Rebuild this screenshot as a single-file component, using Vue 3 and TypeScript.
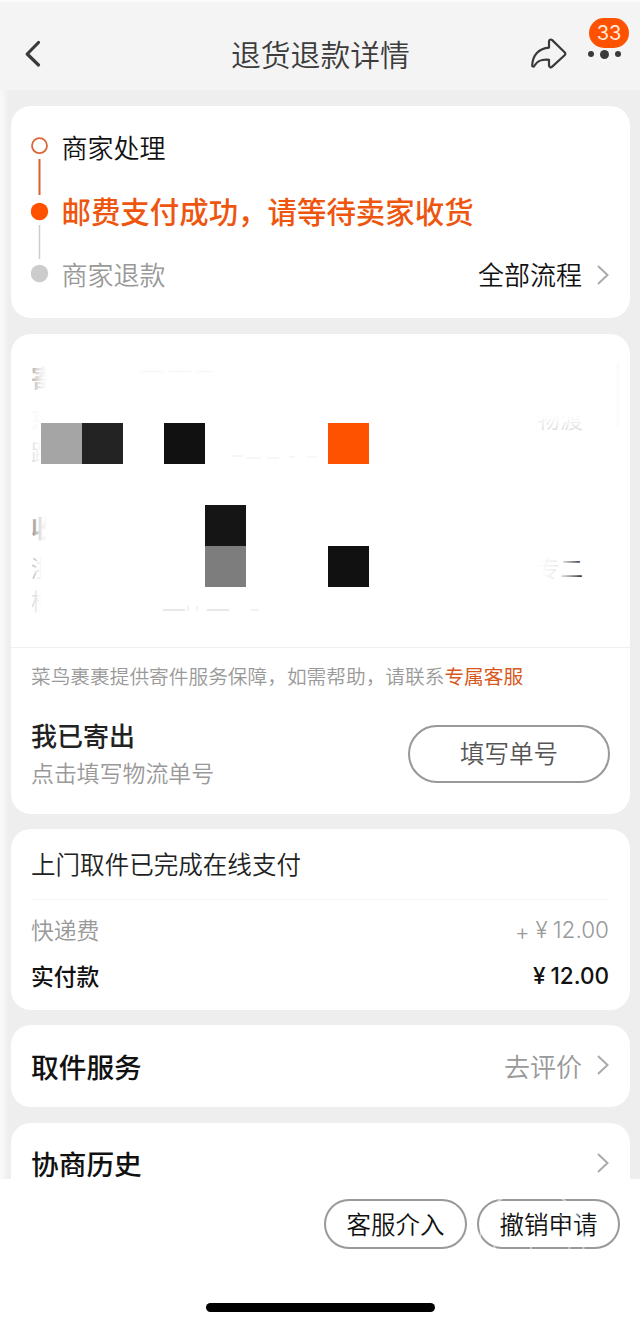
<script setup lang="ts">
interface Step {
  label: string
  state: 'done' | 'active' | 'pending'
}
interface Block {
  col: number
  row: number
  color: string
}

const steps: Step[] = [
  { label: '商家处理', state: 'done' },
  { label: '邮费支付成功，请等待卖家收货', state: 'active' },
  { label: '商家退款', state: 'pending' },
]

// Mosaic tiles hiding the sender and receiver addresses, on a 41px grid
const blocks: Block[] = [
  { col: 0, row: 0, color: '#a5a5a5' },
  { col: 1, row: 0, color: '#232323' },
  { col: 3, row: 0, color: '#111111' },
  { col: 7, row: 0, color: '#ff5200' },
  { col: 4, row: 2, color: '#151515' },
  { col: 4, row: 3, color: '#7d7d7d' },
  { col: 7, row: 3, color: '#111111' },
]
</script>

<template>
  <div class="page">
    <header class="header">
      <svg class="back" width="18" height="28" viewBox="0 0 18 28">
        <path d="M14.500 2.500 3.200 14 14.500 25" />
      </svg>
      <h1 class="title">退货退款详情</h1>
      <svg class="share" width="38" height="32" viewBox="0 0 38 32">
        <path d="M19 3.600c0-2 1.800-2.700 3.200-1.500L34.600 14.200c1 1 1 2.100 0 3L22.200 28.600c-1.400 1.300-3.200.6-3.200-1.400v-5.400C11.500 21 7.500 22.500 4.400 27.800c-.9 1.300-2.300.9-2.200-.6C2.800 17 9 10.300 19 9.600z" />
      </svg>
      <div class="more">
        <i class="dot"></i><i class="dot big"></i><i class="dot"></i>
        <span class="badge">33</span>
      </div>
    </header>

    <main class="content">
      <section class="card progress">
        <svg class="rail" width="18" height="190" viewBox="0 0 18 190">
          <circle cx="8.500" cy="30.700" r="7.500" fill="none" stroke="#dc6638" stroke-width="1.800" />
          <path d="M8.500 44v36" stroke="#d9602f" stroke-width="2" />
          <circle cx="8.500" cy="96.500" r="8.700" fill="#ff5200" />
          <path d="M8.500 110v34" stroke="#ccc" stroke-width="1.500" />
          <circle cx="8.500" cy="158.500" r="8.700" fill="#ccc" />
        </svg>
        <div class="steps">
          <div v-for="s in steps" :key="s.label" class="step" :class="s.state">
            <span>{{ s.label }}</span>
            <span v-if="s.state === 'pending'" class="link">
              全部流程
              <svg class="chev" width="14" height="22" viewBox="0 0 14 22"><path d="M2 2l9.500 9L2 20" /></svg>
            </span>
          </div>
        </div>
      </section>

      <section class="card shipping">
        <div class="address">
          <svg class="traces" width="619" height="313" viewBox="0 0 619 313">
            <defs>
              <linearGradient id="fade-l" gradientUnits="userSpaceOnUse" x1="20" y1="0" x2="36" y2="0">
                <stop offset="0" stop-color="#555" stop-opacity=".75" />
                <stop offset=".5" stop-color="#888" stop-opacity=".3" />
                <stop offset="1" stop-color="#999" stop-opacity="0" />
              </linearGradient>
              <linearGradient id="fade-s" gradientUnits="userSpaceOnUse" x1="20" y1="0" x2="31" y2="0">
                <stop offset="0" stop-color="#777" stop-opacity=".6" />
                <stop offset="1" stop-color="#999" stop-opacity="0" />
              </linearGradient>
              <linearGradient id="fade-r" gradientUnits="userSpaceOnUse" x1="526" y1="0" x2="572" y2="0">
                <stop offset="0" stop-color="#999" stop-opacity="0" />
                <stop offset=".5" stop-color="#777" stop-opacity=".2" />
                <stop offset="1" stop-color="#222" stop-opacity="1" />
              </linearGradient>
              <linearGradient id="fade-t" x1="0" y1="0" x2="0" y2="1">
                <stop offset=".4" stop-color="#999" stop-opacity="0" />
                <stop offset="1" stop-color="#888" stop-opacity=".4" />
              </linearGradient>
            </defs>
            <g font-size="25" font-weight="700" fill="url(#fade-l)">
              <text x="20" y="54" opacity=".7">寄</text>
              <text x="20" y="204">收</text>
            </g>
            <g font-size="23" fill="url(#fade-s)">
              <text x="20" y="94" opacity=".15">京</text>
              <text x="20" y="127" opacity=".5">路</text>
              <text x="20" y="243">浙</text>
              <text x="20" y="276" opacity=".6">楼</text>
            </g>
            <text x="526" y="94" font-size="23" fill="url(#fade-t)">物渡</text>
            <text x="526" y="243" font-size="23" fill="url(#fade-r)">专二</text>
            <g fill="none" stroke="#aaa" stroke-width="1.500">
              <path d="M130 37.500h72" stroke-dasharray="22 6" opacity=".1" />
              <path d="M220 122h12m4 2h14m6 0h12m10-1h6m12 0h10" opacity=".13" />
              <path d="M152 276h22m22 0h22" opacity=".35" />
              <path d="M177 272v5m9-5v5m54-1h8" opacity=".2" />
            </g>
            <path d="M607 28v64" stroke="#fbfbfb" stroke-width="3" />
          </svg>
          <div class="mosaic">
            <i
              v-for="b in blocks"
              :key="`${b.col}-${b.row}`"
              :style="{ gridColumn: b.col + 1, gridRow: b.row + 1, background: b.color }"
            ></i>
          </div>
        </div>
        <p class="notice">菜鸟裹裹提供寄件服务保障，如需帮助，请联系<a>专属客服</a></p>
        <div class="sent">
          <div>
            <h2>我已寄出</h2>
            <p>点击填写物流单号</p>
          </div>
          <button class="pill fill">填写单号</button>
        </div>
      </section>

      <section class="card payment">
        <h3>上门取件已完成在线支付</h3>
        <div class="row muted"><span>快递费</span><span class="price"><i>+</i><b>¥</b>12.00</span></div>
        <div class="row total"><span>实付款</span><span class="price"><b>¥</b>12.00</span></div>
      </section>

      <section class="card entry">
        <h2>取件服务</h2>
        <span class="link muted">
          去评价
          <svg class="chev" width="14" height="22" viewBox="0 0 14 22"><path d="M2 2l9.500 9L2 20" /></svg>
        </span>
      </section>

      <section class="card entry last">
        <h2>协商历史</h2>
        <svg class="chev" width="14" height="22" viewBox="0 0 14 22"><path d="M2 2l9.500 9L2 20" /></svg>
      </section>
    </main>

    <footer class="footer">
      <div class="actions">
        <button class="pill">客服介入</button>
        <button class="pill">撤销申请</button>
        <svg class="seal" width="108" height="108" viewBox="0 0 108 108">
          <circle cx="54" cy="54" r="52" />
          <circle cx="54" cy="54" r="38" />
          <path d="M32 76h44M40 64v22m13-30v28m12-20v22" />
        </svg>
      </div>
      <div class="home"></div>
    </footer>
  </div>
</template>

<style>
body {
  margin: 0;
  background: #fff;
}
</style>

<style scoped>
.page {
  width: 640px;
  height: 1325px;
  display: flex;
  flex-direction: column;
  overflow: hidden;
  background: linear-gradient(90deg, #f8f8f8 0 2px, #f2f2f2 6px, #eee 9px);
  color: #111;
  font-family: 'Noto Sans CJK SC', sans-serif;
  font-weight: 350;
}
h1, h2, h3, p {
  margin: 0;
  font-weight: 350;
}
i, b {
  font-style: normal;
  font-weight: inherit;
}
.header {
  flex: none;
  box-sizing: border-box;
  height: 90px;
  padding: 16px 19px 0 24px;
  display: flex;
  align-items: center;
  background: #f4f4f4;
  border-top: 2px solid #fafafa;
}
.back path {
  fill: none;
  stroke: #3a3a3a;
  stroke-width: 3.2;
  stroke-linecap: round;
  stroke-linejoin: round;
}
.title {
  margin: 0 0 3px 189px;
  font-size: 29.800px;
  line-height: 40px;
  color: #3c3c3c;
}
.share {
  margin-left: auto;
}
.share path {
  fill: none;
  stroke: #3a3a3a;
  stroke-width: 2.2;
  stroke-linejoin: round;
}
.more {
  position: relative;
  width: 33px;
  margin-left: 20px;
  display: flex;
  align-items: center;
  justify-content: space-between;
}
.dot {
  width: 6px;
  height: 6px;
  border-radius: 50%;
  background: #3a3a3a;
}
.dot.big {
  width: 9px;
  height: 9px;
}
.badge {
  position: absolute;
  left: 1px;
  bottom: 10.500px;
  width: 40px;
  height: 30px;
  border-radius: 15px;
  background: #ff5200;
  color: #ffe9d8;
  font: 20px/31px Inter, sans-serif;
  text-align: center;
}
.content {
  flex: 1;
  min-height: 0;
  overflow: hidden;
  box-sizing: border-box;
  padding: 15.500px 10px 0 10.500px;
  display: flex;
  flex-direction: column;
  gap: 15.500px;
}
.card {
  flex: none;
  box-sizing: border-box;
  border-radius: 20px;
  background: #fff;
}
.progress {
  height: 212.500px;
  padding: 9.500px 20px 0 20.300px;
  display: flex;
  gap: 12.700px;
}
.steps {
  flex: 1;
}
.step {
  height: 63.400px;
  display: flex;
  align-items: center;
  justify-content: space-between;
  font-size: 26px;
  white-space: nowrap;
}
.step.active {
  font-size: 29.450px;
  font-weight: 500;
  color: #ee560f;
}
.step.pending {
  color: #999;
}
.step .chev {
  margin-top: 3px;
}
.link {
  display: flex;
  align-items: center;
  gap: 14px;
  font-size: 26px;
  color: #111;
}
.link.muted {
  color: #999;
}
.link.muted {
  margin-top: -2px;
}
.chev path {
  fill: none;
  stroke: #aaa;
  stroke-width: 2;
}
.shipping {
  height: 480px;
}
.address {
  position: relative;
  height: 313px;
  border-bottom: 1px solid #f0f0f0;
}
.traces {
  position: absolute;
  left: 0;
  top: 0;
}
.mosaic {
  position: relative;
  display: grid;
  grid-template: repeat(4, 41px) / repeat(8, 41px);
  padding: 89.500px 0 0 30.500px;
}
.notice {
  padding: 13px 20.500px 0;
  font-size: 19.700px;
  line-height: 30px;
  color: #999;
}
.notice a {
  color: #d9581c;
  font-weight: 400;
}
.sent {
  display: flex;
  justify-content: space-between;
  padding: 26px 20px 0 20.500px;
}
.sent h2 {
  font-size: 26px;
  line-height: 36px;
  font-weight: 500;
  color: #222;
}
.sent p {
  margin-top: 3px;
  font-size: 22.900px;
  line-height: 32px;
  color: #999;
}
.pill {
  box-sizing: border-box;
  width: 143px;
  height: 50px;
  padding: 0;
  border: 2px solid #999;
  border-radius: 30px;
  background: #fff;
  color: #111;
  font: 350 24.500px/1 'Noto Sans CJK SC', sans-serif;
}
.pill.fill {
  width: 202px;
  height: 58px;
  margin-top: 8px;
  color: #555;
}
.payment {
  height: 180.500px;
  padding: 0 21px 0 20.500px;
}
.payment h3 {
  height: 71px;
  box-sizing: border-box;
  border-bottom: 1px solid #f7f7f7;
  font-size: 24.550px;
  line-height: 69px;
  color: #222;
}
.row {
  display: flex;
  justify-content: space-between;
  align-items: center;
  height: 46px;
  font-size: 22.800px;
}
.row.muted {
  margin-top: 6.500px;
  color: #999;
}
.row.total {
  font-weight: 500;
  color: #111;
}
.price {
  font-family: Inter, sans-serif;
  font-size: 22.500px;
}
.price i {
  position: relative;
  top: 1.500px;
  margin-right: 6px;
}
.price b {
  margin-right: 5px;
}
.entry {
  height: 82px;
  padding: 0 20px 0 20.500px;
  display: flex;
  align-items: center;
  justify-content: space-between;
}
.entry h2 {
  font-size: 27.700px;
  line-height: 28px;
  font-weight: 500;
  color: #111;
}
.entry.last {
  height: 80px;
}
.footer {
  flex: none;
  box-sizing: border-box;
  height: 146px;
  padding-top: 20px;
  background: #fff;
}
.actions {
  position: relative;
  display: flex;
  justify-content: flex-end;
  gap: 10px;
  padding-right: 20px;
}
.seal {
  position: absolute;
  left: 478px;
  top: -12px;
  fill: none;
  stroke: #fff;
  stroke-width: 2;
  opacity: 0.5;
}
.home {
  width: 229px;
  height: 9px;
  margin: 54px auto 0;
  border-radius: 5px;
  background: #000;
}
</style>
